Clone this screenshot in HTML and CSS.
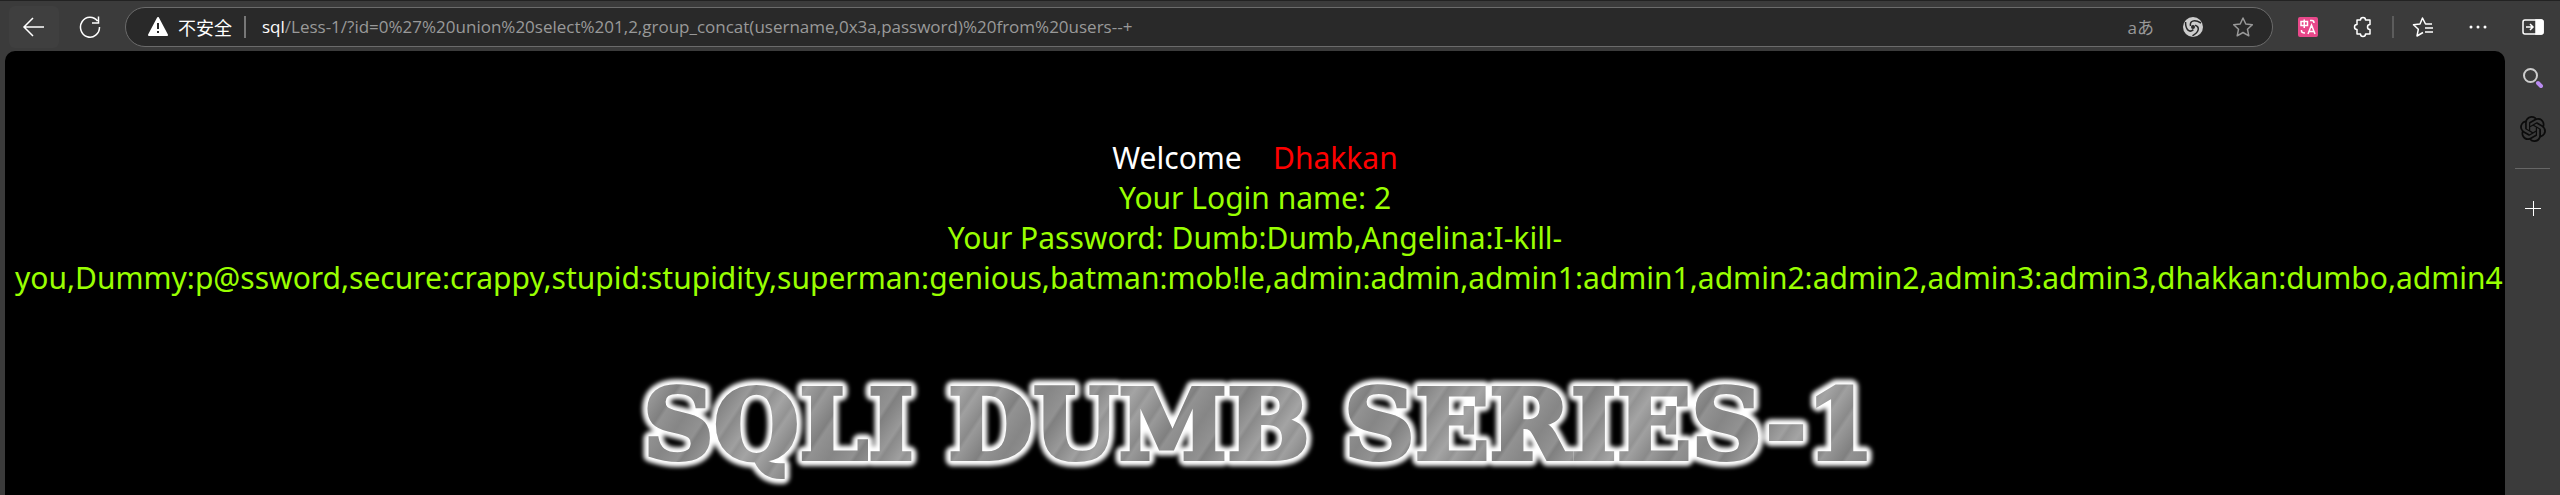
FILE: index.html
```html
<!DOCTYPE html>
<html lang="zh-CN">
<head>
<meta charset="utf-8">
<title>Less-1</title>
<link rel="stylesheet" href="styles.css">
</head>
<body>
<header class="toolbar">
  <button class="tool back" aria-label="Back"><svg width="24" height="24" viewBox="0 0 24 24"><path d="M22 12H3M11 3L2 12l9 9"/></svg></button>
  <button class="tool reload" aria-label="Reload"><svg width="24" height="24" viewBox="0 0 24 24"><path d="M19.500 6A9.500 10 0 1 0 21.500 12M14 8h6.500V1.500"/></svg></button>
  <form class="address">
    <button type="button" class="security">
      <svg width="22" height="22" viewBox="0 0 22 22"><path fill="#fff" stroke="#fff" stroke-width="2" stroke-linejoin="round" d="M11 2L20 19H2z"/><path d="M11 7v6M11 15v2" stroke="#292929" stroke-width="2"/></svg>
      <span>不安全</span>
    </button>
    <span class="bar"></span>
    <label class="host" for="url">sql</label>
    <input id="url" class="url" value="/Less-1/?id=0%27%20union%20select%201,2,group_concat(username,0x3a,password)%20from%20users--+">
    <div class="address-tools">
      <button type="button" class="icon read">aあ</button>
      <button type="button" class="icon" aria-label="Enhance"><svg width="22" height="22" viewBox="0 0 22 22"><circle cx="11" cy="11" r="10" fill="#ccc" stroke="none"/><g stroke="#292929" stroke-width="1.500"><path d="M8.500 10C7.500 5 12 3 19 7"/><path d="M8.500 10C7.500 5 12 3 19 7" transform="rotate(120 11 11)"/><path d="M8.500 10C7.500 5 12 3 19 7" transform="rotate(240 11 11)"/></g><circle cx="11" cy="11" r="2" fill="#292929" stroke="none"/></svg></button>
      <button type="button" class="icon dim" aria-label="Add to favorites"><svg width="22" height="22" viewBox="0 0 22 22"><path stroke-linejoin="round" d="M11 2l2.800 6 6.500.8-4.800 4.500 1.300 6.500L11 16.500l-5.800 3.300 1.300-6.500L1.700 8.800 8.200 8z"/></svg></button>
    </div>
  </form>
  <nav class="actions">
    <button class="icon" aria-label="Translate"><svg width="22" height="22" viewBox="0 0 22 22"><rect x="1" y="1" width="20" height="20" rx="2" fill="#e8488a" stroke="none"/><path stroke="#fff" stroke-width="1.500" d="M4 5.500h6.500v4H4zM7.250 3.500v8.500M13 4.500h2q2 0 2 2.500M4.500 14v1q0 2 3.500 2M11 18l3.500-9 3.500 9M12 15.500h5"/></svg></button>
    <button class="icon" aria-label="Extensions"><svg width="22" height="22" viewBox="0 0 22 22"><path stroke-linejoin="round" d="M5 4h3.500a2.500 2.500 0 0 1 5 0H18v4.500a2.500 2.500 0 0 0 0 5V18h-4.500a2.500 2.500 0 0 1-5 0H5v-4.500a2.500 2.500 0 0 1 0-5z"/></svg></button>
    <span class="bar"></span>
    <button class="icon" aria-label="Favorites"><svg width="22" height="22" viewBox="0 0 22 22"><path stroke-linejoin="round" d="M20 8h-6.500L10.500 2 8 8l-6.500.8 4.800 4.500L5 20l6-3.500M13 12h8M13 16h8"/></svg></button>
    <button class="icon" aria-label="Menu"><svg width="22" height="22" viewBox="0 0 22 22"><g fill="#fff" stroke="none"><circle cx="4" cy="11" r="1.500"/><circle cx="11" cy="11" r="1.500"/><circle cx="18" cy="11" r="1.500"/></g></svg></button>
    <button class="icon" aria-label="Sidebar"><svg width="22" height="22" viewBox="0 0 22 22"><rect x="1" y="4" width="20" height="14" rx="2"/><path d="M14 4h5q2 0 2 2v10q0 2-2 2h-5z" fill="#fff"/><path d="M4 11h7M8 8l3 3-3 3"/></svg></button>
  </nav>
</header>
<div class="content">
  <main class="page">
    <div class="result">
      <div class="welcome">Welcome&nbsp;&nbsp;&nbsp;&nbsp;<span class="name">Dhakkan</span></div>
      <div>Your Login name: 2</div>
      <div>Your Password: Dumb:Dumb,Angelina:I-kill-<br>you,Dummy:p@ssword,secure:crappy,stupid:stupidity,superman:genious,batman:mob!le,admin:admin,admin1:admin1,admin2:admin2,admin3:admin3,dhakkan:dumbo,admin4</div>
    </div>
    <svg class="banner" width="1260" height="120" viewBox="0 0 1260 120" role="img" aria-label="SQLI DUMB SERIES-1">
      <defs>
        <linearGradient id="metal" gradientUnits="userSpaceOnUse" x1="0" y1="0" x2="60" y2="40" spreadMethod="reflect">
          <stop offset="0" stop-color="#a4a4a4"/><stop offset=".15" stop-color="#939393"/><stop offset=".2" stop-color="#a0a0a0"/><stop offset=".4" stop-color="#8a8a8a"/><stop offset=".45" stop-color="#999"/><stop offset=".7" stop-color="#808080"/><stop offset=".75" stop-color="#929292"/><stop offset="1" stop-color="#868686"/>
        </linearGradient>
        <filter id="glow" x="-5%" y="-30%" width="110%" height="160%"><feGaussianBlur stdDeviation="2"/></filter>
      </defs>
      <g class="banner-text">
        <text class="halo" x="18" y="84">SQLI DUMB SERIES-1</text>
        <text class="face" x="18" y="84">SQLI DUMB SERIES-1</text>
      </g>
    </svg>
  </main>
  <aside class="sidebar">
    <button class="icon" aria-label="Search"><svg width="26" height="26" viewBox="0 0 26 26"><circle cx="10.500" cy="10.500" r="6.500" stroke="#ccc" stroke-width="2"/><path d="M18 18l3 3" stroke="#b98af0" stroke-width="4" stroke-linecap="round"/></svg></button>
    <button class="icon" aria-label="ChatGPT"><svg width="26" height="26" viewBox="0 0 24 24"><path fill="#0b0b0b" stroke="none" d="M22.282 9.821a5.985 5.985 0 0 0-.516-4.910 6.046 6.046 0 0 0-6.510-2.900A6.065 6.065 0 0 0 4.981 4.182a5.985 5.985 0 0 0-3.998 2.900 6.046 6.046 0 0 0 .743 7.097 5.980 5.980 0 0 0 .510 4.911 6.051 6.051 0 0 0 6.515 2.900A5.985 5.985 0 0 0 13.260 24a6.056 6.056 0 0 0 5.772-4.206 5.990 5.990 0 0 0 3.998-2.900 6.056 6.056 0 0 0-.748-7.073zM13.260 22.430a4.476 4.476 0 0 1-2.876-1.040l.141-.081 4.779-2.758a.795.795 0 0 0 .393-.681v-6.737l2.020 1.169a.071.071 0 0 1 .038.052v5.583a4.504 4.504 0 0 1-4.495 4.493zM3.600 18.304a4.470 4.470 0 0 1-.535-3.014l.142.085 4.783 2.759a.771.771 0 0 0 .781 0l5.843-3.369v2.332a.080.080 0 0 1-.033.062L9.740 19.950a4.500 4.500 0 0 1-6.140-1.646zM2.341 7.896a4.485 4.485 0 0 1 2.366-1.973V11.600a.766.766 0 0 0 .388.677l5.815 3.354-2.020 1.169a.076.076 0 0 1-.071 0l-4.830-2.787A4.504 4.504 0 0 1 2.341 7.872zm16.597 3.855l-5.833-3.387L15.119 7.200a.076.076 0 0 1 .071 0l4.830 2.791a4.494 4.494 0 0 1-.677 8.105v-5.678a.790.790 0 0 0-.405-.667zm2.011-3.023l-.142-.085-4.774-2.782a.776.776 0 0 0-.785 0L9.409 9.230V6.897a.066.066 0 0 1 .028-.061l4.830-2.787a4.500 4.500 0 0 1 6.682 4.660zM8.307 12.863l-2.020-1.164a.080.080 0 0 1-.038-.057V6.074a4.500 4.500 0 0 1 7.376-3.453l-.142.081L8.704 5.460a.795.795 0 0 0-.393.681zm1.097-2.366l2.602-1.500 2.607 1.500v2.999l-2.597 1.500-2.607-1.500z"/></svg></button>
    <hr>
    <button class="icon" aria-label="Customize"><svg width="26" height="26" viewBox="0 0 26 26"><path stroke-width="1" d="M5 13.500h16M13.500 6v15"/></svg></button>
  </aside>
</div>
</body>
</html>
```
FILE: styles.css
```css
* { box-sizing: border-box; }
body {
  margin: 0;
  min-height: 100vh;
  display: flex;
  flex-direction: column;
  background: #3b3b3b;
  color: #fff;
  font-family: "Open Sans", "Noto Sans CJK SC", sans-serif;
}
button { border: 0; padding: 0; background: none; color: inherit; font: inherit; }
svg { display: block; fill: none; stroke: #fff; stroke-width: 1.5; }
.toolbar {
  display: flex;
  align-items: center;
  height: 51px;
  padding: 1px 16px 0 9px;
  border-top: 1px solid #222;
}
.tool { display: grid; place-items: center; width: 50px; height: 42px; border-radius: 6px; }
.back { background: #3f3f3f; }
.reload { margin: 0 10px 0 6px; }
.address {
  flex: 1;
  display: flex;
  align-items: center;
  height: 40px;
  padding: 0 18px 0 21px;
  border: 1px solid #6b6b6b;
  border-radius: 20px;
  background: #292929;
  font-size: 17px;
}
.security { display: flex; align-items: center; gap: 9px; font-size: 18px; }
.bar { width: 2px; height: 22px; background: #777; }
.address .bar { margin: 0 16px 0 12px; }
.url { flex: 1; border: 0; padding: 0; background: none; color: #999; font: inherit; outline: 0; }
.address-tools { display: flex; align-items: center; gap: 28px; }
.icon { display: grid; place-items: center; }
.read { color: #999; font-size: 17px; }
.dim svg { stroke: #999; }
.actions { display: flex; align-items: center; margin-left: 24px; gap: 33px; }
.actions .bar { background: #5c5c5c; margin: 0 -15px; }
.content { flex: 1; display: flex; }
.page {
  flex: 1;
  min-width: 0;
  overflow: hidden;
  margin-left: 5px;
  padding: 87px 10px 0;
  border-radius: 10px 10px 0 0;
  background: #000;
}
.result { color: #9f0; font-family: "Noto Sans", sans-serif; font-size: 30px; line-height: 40px; text-align: center; white-space: nowrap; }
.welcome { color: #fff; }
.name { color: #f00; }
.banner { margin: 77px auto 0; overflow: visible; }
.banner-text { font: bold 98px "DejaVu Serif", serif; }
.halo { fill: #fff; stroke: #fff; stroke-width: 14; stroke-linejoin: round; filter: url(#glow); }
.face { fill: url(#metal); stroke: url(#metal); stroke-width: 4; }
.sidebar { width: 55px; padding: 14px 10px; display: flex; flex-direction: column; align-items: center; gap: 25px; }
.sidebar hr { width: 35px; margin: 1px 0; border: 0; border-top: 1px solid #666; }
```
